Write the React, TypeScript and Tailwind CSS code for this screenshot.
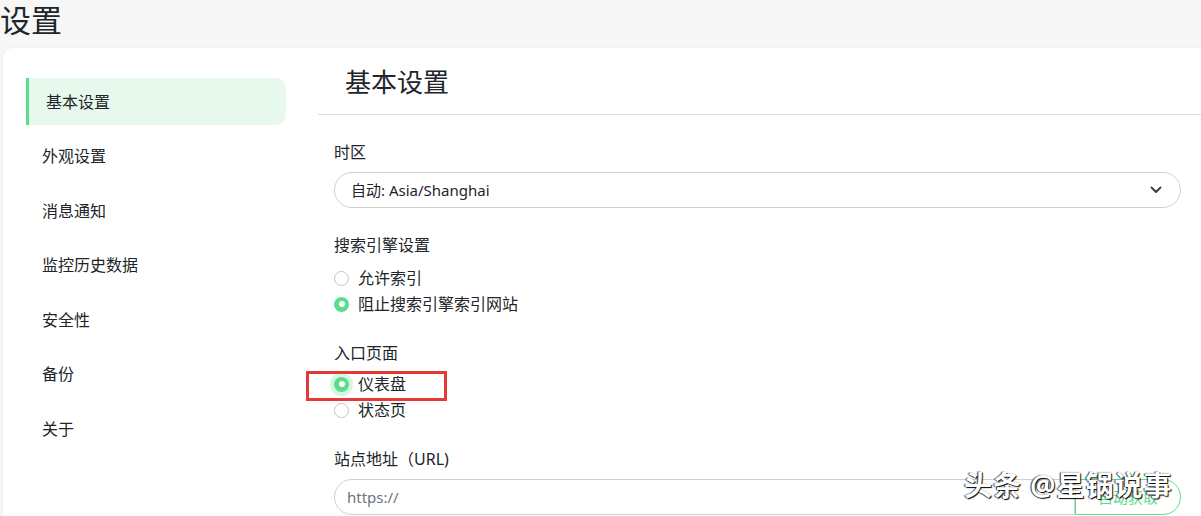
const font = {
  fontFamily: '"Noto Sans", "Noto Sans CJK SC", sans-serif',
};

const menu = ["基本设置", "外观设置", "消息通知", "监控历史数据", "安全性", "备份", "关于"];

function Radio({ label, checked, focus }: { label: string; checked?: boolean; focus?: boolean }) {
  return (
    <div className="flex h-[26px] items-center">
      {checked ? (
        <span
          className={
            "flex h-[15px] w-[15px] items-center justify-center rounded-full bg-[#5cdd8b]" +
            (focus ? " shadow-[0_0_0_4px_rgba(92,221,139,0.25)]" : "")
          }
        >
          <span className="h-[6px] w-[6px] rounded-full bg-white" />
        </span>
      ) : (
        <span className="h-[15px] w-[15px] rounded-full border border-[#c4c4c4] bg-white" />
      )}
      <span className="ml-[9px] text-[16px] text-[#212529]">{label}</span>
    </div>
  );
}

function Label({ children }: { children: React.ReactNode }) {
  return <div className="h-[24px] text-[16px] leading-[24px] text-[#212529]">{children}</div>;
}

export default function App() {
  return (
    <div className="relative h-[516px] w-[1201px] overflow-hidden bg-[#f7f7f7]" style={font}>
      <div className="h-[48px] pt-[1px] text-[31px] leading-[38px] text-[#212529]">设置</div>

      <div className="ml-[3px] flex h-[480px] rounded-tl-[10px] bg-white shadow-[0_0_6px_rgba(0,0,0,0.04)]">
        {/* sidebar */}
        <div className="ml-[23px] mt-[30px] flex w-[260px] flex-col gap-[7.5px]">
          {menu.map((m, i) => (
            <div
              key={m}
              className={
                "flex h-[47px] items-center text-[16px] text-[#212529] " +
                (i === 0
                  ? "rounded-r-[10px] border-l-[3px] border-[#5cdd8b] bg-[#e7f9ec] pl-[17px]"
                  : "pl-[16px]")
              }
            >
              {m}
            </div>
          ))}
        </div>

        {/* content */}
        <div className="ml-[32px] flex-1">
          <div className="h-[67px] border-b border-[#dedede] pl-[27px] pt-[15px] text-[26px] leading-[38px] text-[#212529]">
            基本设置
          </div>

          <div className="pl-[16px] pr-[20px] pt-[25px]">
            <Label>时区</Label>
            <div className="mt-[8px] flex h-[36px] items-center justify-between rounded-full border border-[#d0d0d0] pl-[16px] pr-[18px]">
              <span className="text-[15px] text-[#212529]">自动: Asia/Shanghai</span>
              <svg width="12" height="8" viewBox="0 0 12 8" fill="none">
                <path d="M1.5 1.5 6 6l4.5-4.5" stroke="#343a40" strokeWidth="1.8" strokeLinecap="round" strokeLinejoin="round" />
              </svg>
            </div>

            <div className="mt-[25px]">
              <Label>搜索引擎设置</Label>
              <div className="mt-[8px]">
                <Radio label="允许索引" />
                <Radio label="阻止搜索引擎索引网站" checked />
              </div>
            </div>

            <div className="mt-[24px]">
              <Label>入口页面</Label>
              <div className="mt-[6px]">
                <Radio label="仪表盘" checked focus />
                <Radio label="状态页" />
              </div>
            </div>

            <div className="mt-[24px]">
              <Label>站点地址（URL)</Label>
              <div className="mt-[8px] flex h-[36px]">
                <div className="flex flex-1 items-center rounded-l-full border border-[#d0d0d0] pl-[12px] text-[15px] text-[#6c757d]">
                  https://
                </div>
                <div className="flex w-[106px] items-center justify-center rounded-r-full border border-[#5cdd8b] text-[15px] text-[#5cdd8b]">
                  自动获取
                </div>
              </div>
            </div>
          </div>
        </div>
      </div>

      {/* annotation box */}
      <div className="absolute left-[306px] top-[371px] h-[30px] w-[141px] border-[3px] border-[#e53935]" />

      {/* watermark */}
      <div
        className="absolute left-[964px] top-[470px] text-[28px] leading-[30px] font-bold tracking-[1px] text-white"
        style={{ textShadow: "1px 1px 1px #000, -1px 0 1px #333" }}
      >
        头条 @星锅说事
      </div>
    </div>
  );
}
